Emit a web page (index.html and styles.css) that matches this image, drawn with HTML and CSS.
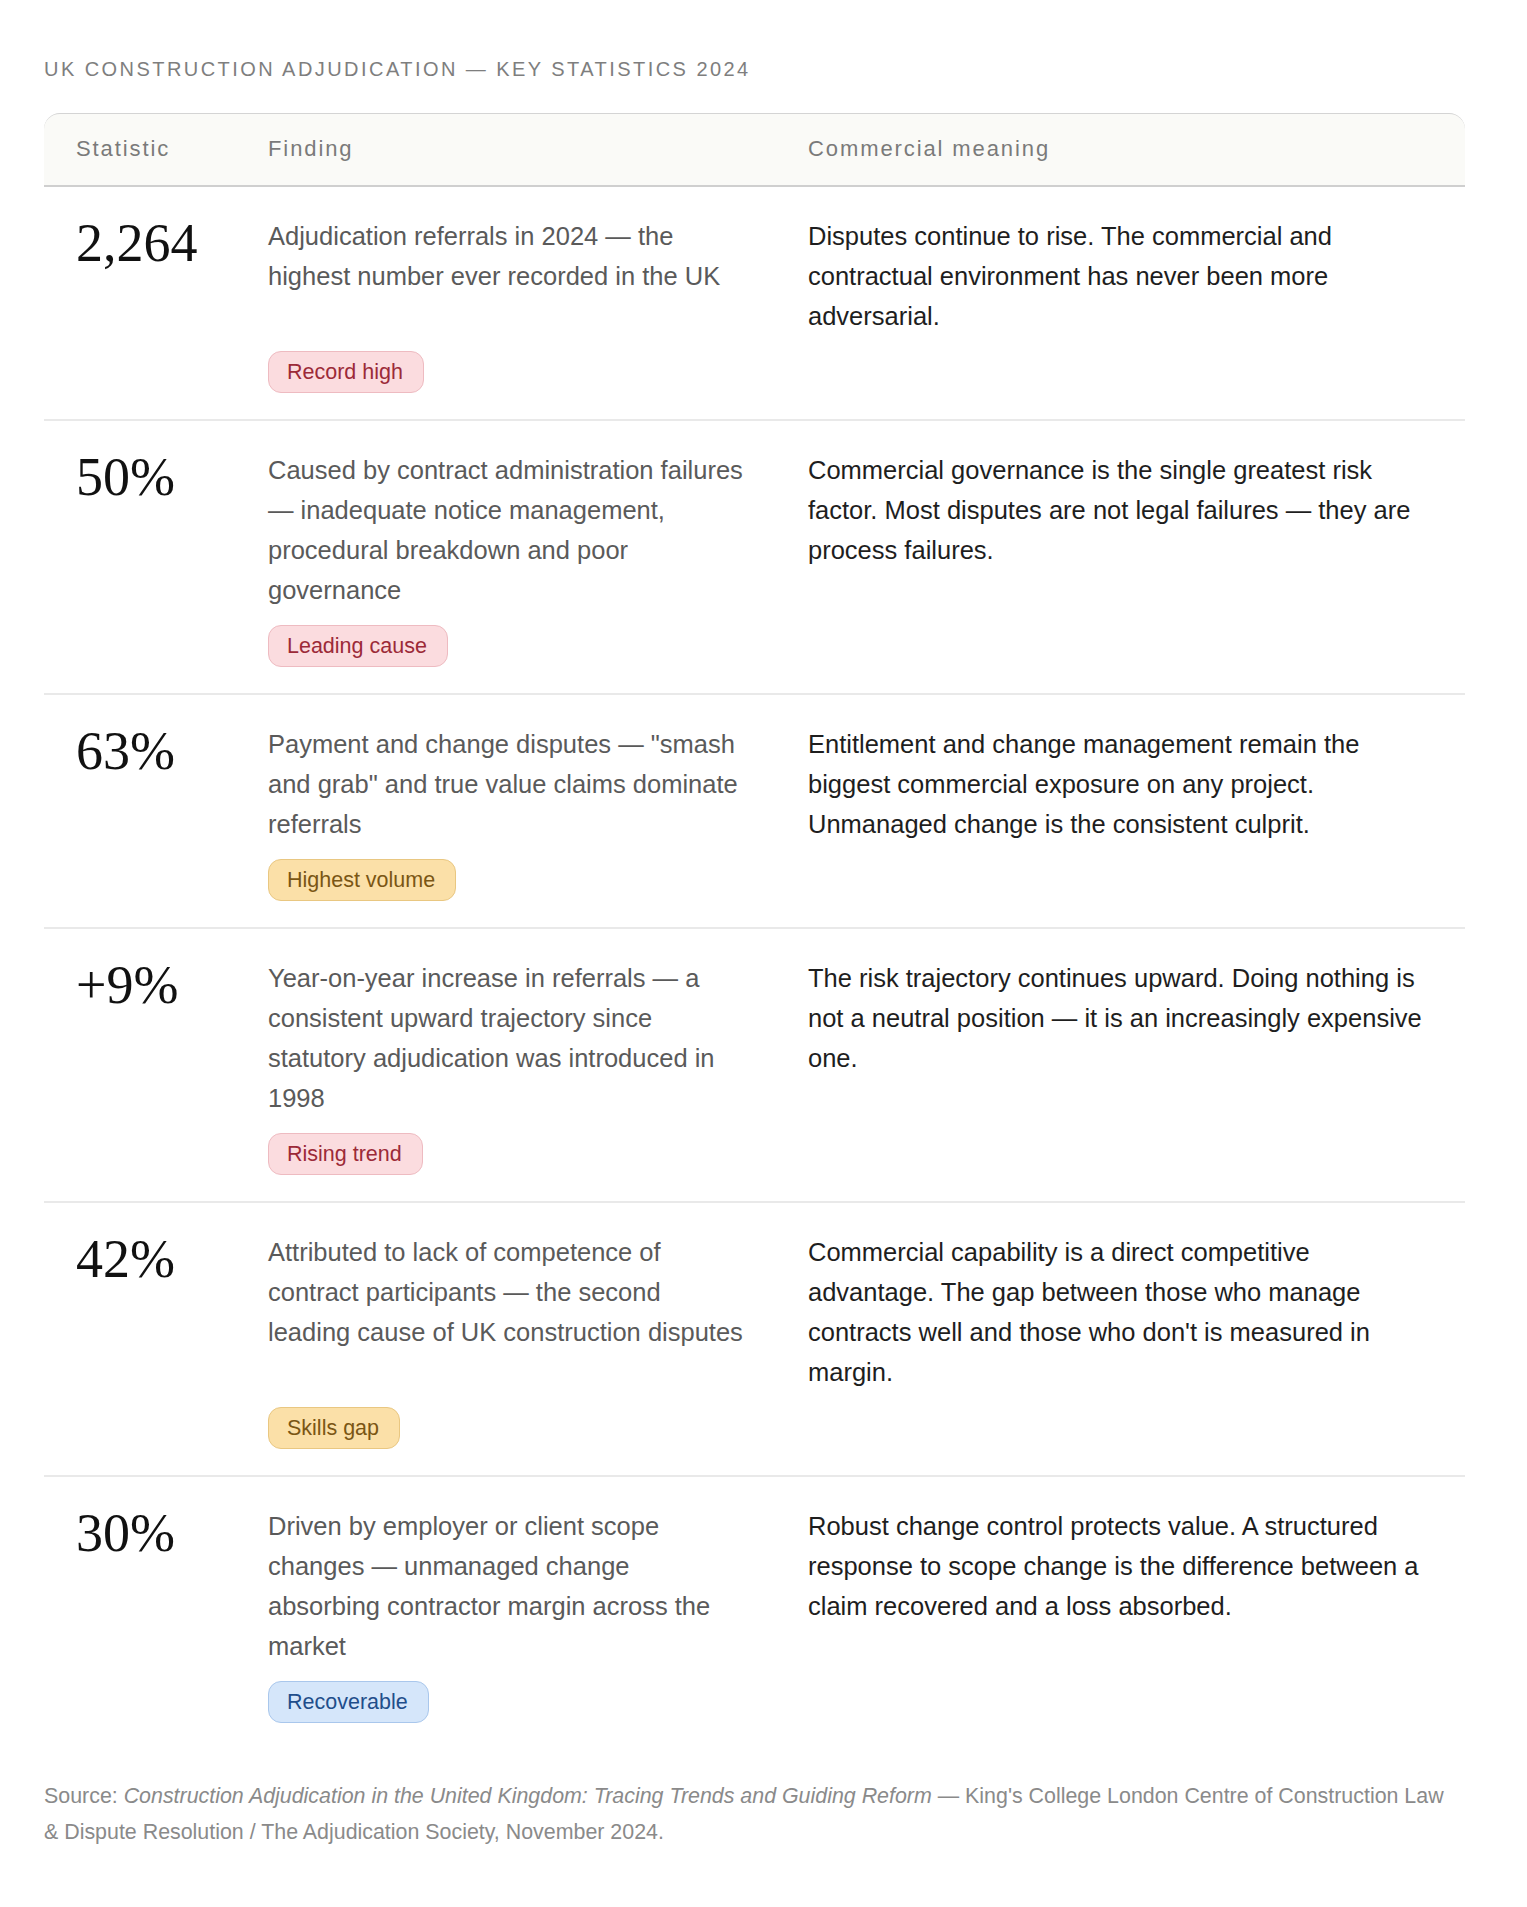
FILE: index.html
```html
<!DOCTYPE html>
<html lang="en">
<head>
<meta charset="utf-8">
<title>UK Construction Adjudication — Key Statistics 2024</title>
<link rel="stylesheet" href="styles.css">
</head>
<body>
<main class="page">
  <h1 class="title">UK Construction Adjudication — Key Statistics 2024</h1>
  <section class="table">
    <div class="head row-grid">
      <div class="h-stat">Statistic</div>
      <div class="h-find">Finding</div>
      <div class="h-comm">Commercial meaning</div>
    </div>

    <div class="row row-grid">
      <div class="stat">2,264</div>
      <div class="find">Adjudication referrals in 2024 — the highest number ever recorded in the UK</div>
      <div class="comm">Disputes continue to rise. The commercial and contractual environment has never been more adversarial.</div>
      <div class="tag-cell"><span class="tag tag-red">Record high</span></div>
    </div>

    <div class="row row-grid">
      <div class="stat">50%</div>
      <div class="find">Caused by contract administration failures — inadequate notice management, procedural breakdown and poor governance</div>
      <div class="comm">Commercial governance is the single greatest risk factor. Most disputes are not legal failures — they are process failures.</div>
      <div class="tag-cell"><span class="tag tag-red">Leading cause</span></div>
    </div>

    <div class="row row-grid">
      <div class="stat">63%</div>
      <div class="find">Payment and change disputes — "smash and grab" and true value claims dominate referrals</div>
      <div class="comm">Entitlement and change management remain the biggest commercial exposure on any project. Unmanaged change is the consistent culprit.</div>
      <div class="tag-cell"><span class="tag tag-amber">Highest volume</span></div>
    </div>

    <div class="row row-grid">
      <div class="stat">+9%</div>
      <div class="find">Year-on-year increase in referrals — a consistent upward trajectory since statutory adjudication was introduced in 1998</div>
      <div class="comm">The risk trajectory continues upward. Doing nothing is not a neutral position — it is an increasingly expensive one.</div>
      <div class="tag-cell"><span class="tag tag-red">Rising trend</span></div>
    </div>

    <div class="row row-grid">
      <div class="stat">42%</div>
      <div class="find">Attributed to lack of competence of contract participants — the second leading cause of UK construction disputes</div>
      <div class="comm">Commercial capability is a direct competitive advantage. The gap between those who manage contracts well and those who don't is measured in margin.</div>
      <div class="tag-cell"><span class="tag tag-amber">Skills gap</span></div>
    </div>

    <div class="row row-grid last">
      <div class="stat">30%</div>
      <div class="find">Driven by employer or client scope changes — unmanaged change absorbing contractor margin across the market</div>
      <div class="comm">Robust change control protects value. A structured response to scope change is the difference between a claim recovered and a loss absorbed.</div>
      <div class="tag-cell"><span class="tag tag-blue">Recoverable</span></div>
    </div>
  </section>

  <p class="source">Source: <em>Construction Adjudication in the United Kingdom: Tracing Trends and Guiding Reform</em> — King's College London Centre of Construction Law &amp; Dispute Resolution / The Adjudication Society, November 2024.</p>
</main>
</body>
</html>
```

FILE: styles.css
```css
html, body {
  margin: 0;
  padding: 0;
  background: #ffffff;
}

body {
  font-family: "Liberation Sans", Arial, sans-serif;
  color: #222222;
}

.page {
  padding: 58px 62px 40px 44px;
}

.title {
  margin: 0;
  font-size: 20px;
  line-height: 23px;
  font-weight: 400;
  letter-spacing: 2.45px;
  text-transform: uppercase;
  color: #7e7e7e;
}

.table {
  margin-top: 32px;
}

.row-grid {
  display: grid;
  grid-template-columns: 160px 508px 1fr;
  column-gap: 32px;
  padding-left: 32px;
  padding-right: 33px;
}

.head {
  background: #fafaf7;
  border-top: 1px solid #d4d4d4;
  border-bottom: 2px solid #cfcfcf;
  border-radius: 16px 16px 0 0;
  padding-top: 22px;
  padding-bottom: 23px;
  font-size: 22px;
  line-height: 26px;
  letter-spacing: 1.9px;
  color: #7a7a7a;
}

.row {
  grid-template-areas:
    "stat find comm"
    ".    tag  .";
  row-gap: 15px;
  padding-top: 29px;
  padding-bottom: 26px;
  border-bottom: 2px solid #e9e9e9;
}

.row.last {
  border-bottom: none;
}

.stat {
  grid-area: stat;
  font-family: "Liberation Serif", "Times New Roman", serif;
  font-variant-numeric: oldstyle-nums;
  font-size: 54px;
  line-height: 1;
  color: #111111;
}

.find {
  grid-area: find;
  max-width: 478px;
  font-size: 25.5px;
  line-height: 40px;
  color: #5a5a5a;
}

.comm {
  grid-area: comm;
  font-size: 25.5px;
  line-height: 40px;
  color: #1e1e1e;
}

.tag-cell {
  grid-area: tag;
  display: flex;
}

.tag {
  display: inline-block;
  font-size: 21.5px;
  line-height: 24px;
  padding: 8px 20px 8px 18px;
  border: 1px solid transparent;
  border-radius: 13px;
}

.tag-red {
  background: #fbdcdf;
  border-color: #eebbc1;
  color: #9c2a38;
}

.tag-amber {
  background: #fbe0a8;
  border-color: #e9c781;
  color: #7a5614;
}

.tag-blue {
  background: #d5e6fa;
  border-color: #a9c7ec;
  color: #1f4e8b;
}

.source {
  margin: 29px 0 0 0;
  max-width: 1412px;
  font-size: 21.4px;
  line-height: 36px;
  color: #8a8a8a;
}

.source em {
  font-style: italic;
}
```
